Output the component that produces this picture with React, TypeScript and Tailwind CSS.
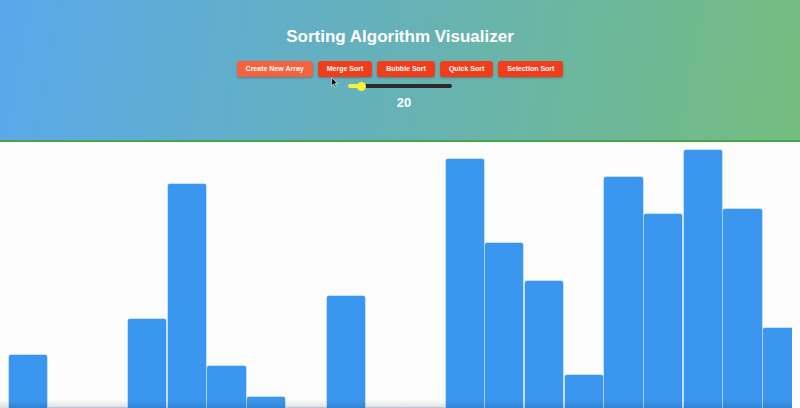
import React from "react";

const heights = [53, 0, 0, 89, 224, 42, 11, 0, 112, 0, 0, 249, 165, 127, 33, 231, 194, 258, 199, 80];

const algos = ["Merge Sort", "Bubble Sort", "Quick Sort", "Selection Sort"];

export default function App() {
  return (
    <div className="h-[408px] w-[800px] overflow-hidden bg-[#fcfcfd] font-['Liberation_Sans',Arial,sans-serif]">
      {/* Header */}
      <header className="relative flex h-[142px] flex-col items-center border-b-2 border-[#43a548] bg-[linear-gradient(100deg,#5aa8ec_0%,#66b2b6_50%,#74bd7e_100%)] pt-[26px]">
        <h1 className="text-[17px] font-bold leading-[22px] text-white">Sorting Algorithm Visualizer</h1>

        <div className="mt-[13px] flex items-center gap-[5px]">
          <button className="h-[16px] rounded-[3px] bg-[#f4623f] px-[9px] text-[7px] font-bold leading-[16px] text-white shadow-[0_1px_2px_rgba(0,0,0,0.25)]">
            Create New Array
          </button>
          {algos.map((a) => (
            <button
              key={a}
              className="h-[16px] rounded-[3px] bg-[#f23d1b] px-[9px] text-[7px] font-bold leading-[16px] text-white shadow-[0_1px_2px_rgba(0,0,0,0.25)]"
            >
              {a}
            </button>
          ))}
        </div>

        {/* Slider */}
        <div className="relative mt-[4px] flex h-[10px] w-[104px] items-center">
          <div className="h-[4px] w-[14px] rounded-l-full bg-[#f3f13a]" />
          <div className="h-[4px] flex-1 rounded-r-full bg-[#2b2b2b]" />
          <div className="absolute left-[9px] top-[0.5px] h-[9px] w-[9px] rounded-full bg-[#f6f23e]" />
          {/* mouse pointer */}
          <svg className="absolute -left-[17px] top-[-4px]" width="7" height="11" viewBox="0 0 7 11">
            <path d="M0.5 0.5 L0.5 9 L2.6 7 L4 10.3 L5.3 9.7 L3.9 6.5 L6.6 6.5 Z" fill="#111" stroke="#fff" strokeWidth="0.6" />
          </svg>
        </div>

        <div className="ml-[8px] mt-[4px] text-[13px] font-bold leading-[16px] text-white">20</div>
      </header>

      {/* Bars */}
      <div className="relative h-[266px] w-[792px] overflow-hidden">
        <div className="flex h-full items-end gap-[1.5px] pl-[9px]">
          {heights.map((h, i) => (
            <div
              key={i}
              className="w-[38.2px] shrink-0 rounded-t-[2px] bg-[#3a96ee] shadow-[0_0_0_0.5px_#8cc3f4]"
              style={{ height: h }}
            />
          ))}
        </div>
        <div className="pointer-events-none absolute inset-x-0 bottom-0 h-[8px] bg-[linear-gradient(to_bottom,rgba(0,0,0,0),rgba(0,0,0,0.12))]" />
      </div>
    </div>
  );
}
